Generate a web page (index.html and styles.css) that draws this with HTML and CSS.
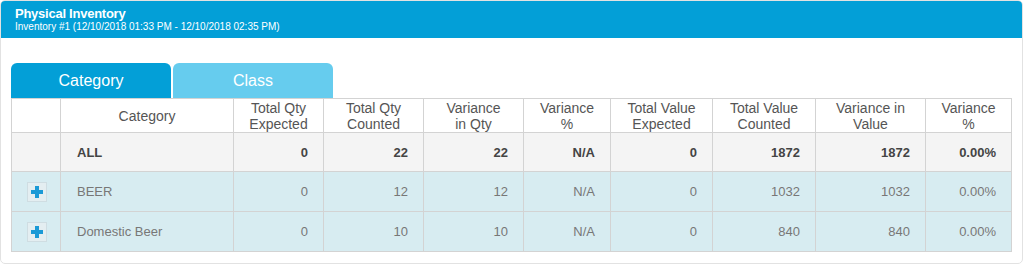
FILE: index.html
```html
<!DOCTYPE html>
<html>
<head>
<meta charset="utf-8">
<link rel="stylesheet" href="styles.css">
</head>
<body>
<div class="panel">
  <div class="panel-head">
    <div class="title">Physical Inventory</div>
    <div class="subtitle">Inventory #1 (12/10/2018 01:33 PM - 12/10/2018 02:35 PM)</div>
  </div>
  <div class="panel-body">
    <div class="tabs">
      <div class="tab active">Category</div>
      <div class="tab">Class</div>
    </div>
    <table class="grid">
      <colgroup>
        <col class="c-btn"><col class="c-cat"><col class="c-90"><col class="c-100"><col class="c-100"><col class="c-87"><col class="c-102"><col class="c-103"><col class="c-110"><col class="c-86">
      </colgroup>
      <thead>
        <tr>
          <th></th>
          <th>Category</th>
          <th>Total Qty<br>Expected</th>
          <th>Total Qty<br>Counted</th>
          <th>Variance<br>in Qty</th>
          <th>Variance<br>%</th>
          <th>Total Value<br>Expected</th>
          <th>Total Value<br>Counted</th>
          <th>Variance in<br>Value</th>
          <th>Variance<br>%</th>
        </tr>
      </thead>
      <tbody>
        <tr class="total">
          <td></td>
          <td class="name">ALL</td>
          <td>0</td><td>22</td><td>22</td><td>N/A</td><td>0</td><td>1872</td><td>1872</td><td>0.00%</td>
        </tr>
        <tr class="item">
          <td class="btn-cell"><span class="plus"><svg width="12" height="12" viewBox="0 0 12 12"><rect x="4" y="0" width="4" height="12" fill="#1b9ad6"/><rect x="0" y="4" width="12" height="4" fill="#1b9ad6"/></svg></span></td>
          <td class="name">BEER</td>
          <td>0</td><td>12</td><td>12</td><td>N/A</td><td>0</td><td>1032</td><td>1032</td><td>0.00%</td>
        </tr>
        <tr class="item">
          <td class="btn-cell"><span class="plus"><svg width="12" height="12" viewBox="0 0 12 12"><rect x="4" y="0" width="4" height="12" fill="#1b9ad6"/><rect x="0" y="4" width="12" height="4" fill="#1b9ad6"/></svg></span></td>
          <td class="name">Domestic Beer</td>
          <td>0</td><td>10</td><td>10</td><td>N/A</td><td>0</td><td>840</td><td>840</td><td>0.00%</td>
        </tr>
      </tbody>
    </table>
  </div>
</div>
</body>
</html>
```
FILE: styles.css
```css
* { box-sizing: border-box; }
html, body { margin: 0; padding: 0; background: #fff; }
body { font-family: "Liberation Sans", Arial, sans-serif; }

.panel {
  width: 1023px;
  height: 264px;
  border: 1px solid #e2e2e2;
  border-radius: 5px;
  overflow: hidden;
}

.panel-head {
  background: #039fd7;
  height: 37px;
  padding: 6px 14px 0;
  color: #fff;
}
.title {
  font-weight: bold;
  font-size: 13px;
  line-height: 13px;
  letter-spacing: -0.25px;
}
.subtitle {
  font-size: 10px;
  line-height: 12px;
  margin-top: 1px;
}

.panel-body {
  padding: 25px 10px 10px 10px;
}

.tabs {
  display: flex;
  gap: 2px;
  height: 35px;
}
.tab {
  width: 160px;
  background: #66ccee;
  color: #fff;
  font-size: 16px;
  border-radius: 6px 6px 0 0;
  display: flex;
  align-items: center;
  justify-content: center;
}
.tab.active { background: #039fd7; }

.grid {
  width: 1000px;
  table-layout: fixed;
  border-collapse: collapse;
  font-size: 13px;
}
.c-btn { width: 49px; }
.c-cat { width: 173px; }
.c-90 { width: 90px; }
.c-100 { width: 100px; }
.c-87 { width: 87px; }
.c-102 { width: 102px; }
.c-103 { width: 103px; }
.c-110 { width: 110px; }
.c-86 { width: 86px; }

.grid th, .grid td {
  border: 1px solid #d3d3d3;
}
.grid th {
  height: 34px;
  font-size: 14px;
  font-weight: normal;
  color: #555;
  line-height: 16px;
  text-align: center;
  padding: 0 4px;
  background: #fff;
}
.grid td {
  height: 40px;
  text-align: right;
  padding: 0 15px 0 4px;
  color: #777;
}
.grid td.name {
  text-align: left;
  padding-left: 16px;
}
.grid tr.total td {
  height: 39px;
  background: #f4f4f4;
  font-weight: bold;
  color: #444;
}
.grid tr.item td {
  background: #d7ecf1;
}
.grid td.btn-cell {
  text-align: center;
  padding: 0;
}
.plus {
  display: inline-flex;
  width: 20px;
  height: 20px;
  align-items: center;
  justify-content: center;
  background: #e4eef1;
  border: 1px solid #cfdde2;
  vertical-align: middle;
  margin-left: 2px;
}
```
